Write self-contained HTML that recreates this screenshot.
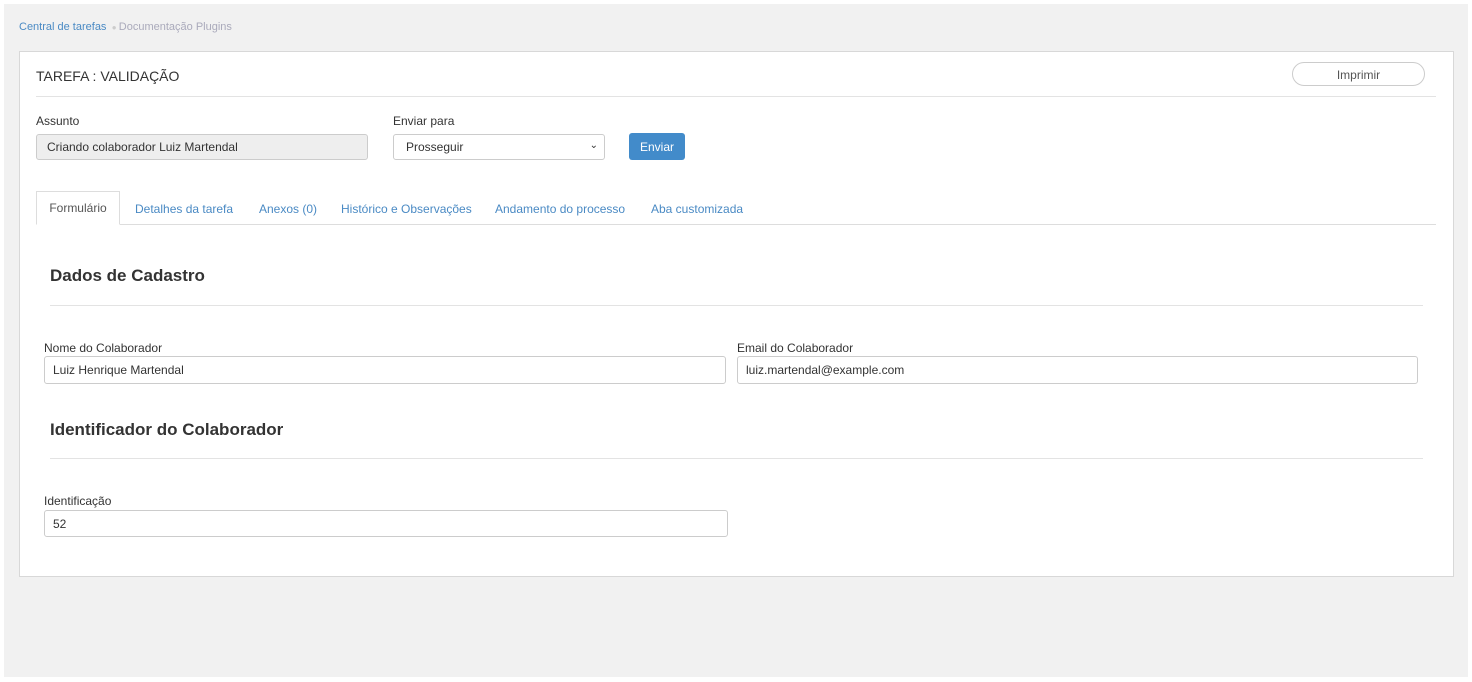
<!DOCTYPE html>
<html><head><style>
*{box-sizing:border-box;margin:0;padding:0}
body{width:1472px;height:682px;background:#fff;font-family:"Liberation Sans",sans-serif;position:relative;overflow:hidden;color:#333}
.bg{position:absolute;left:4px;top:4px;width:1464px;height:673px;background:#f1f1f1}
.a{position:absolute;white-space:nowrap}
.panel{position:absolute;left:19px;top:51px;width:1435px;height:526px;background:#fff;border:1px solid #d8d8d8}
.in{position:absolute;border:1px solid #ccc;border-radius:3px;background:#fff;font-size:12px;padding-left:8px;display:flex;align-items:center;color:#333}
.hr{position:absolute;height:1px;background:#e3e3e3}
.lbl{font-size:12px;color:#333}
.tab{font-size:12px;color:#4a8ac4}
h2{position:absolute;font-size:17px;font-weight:bold;color:#333;white-space:nowrap}
</style></head><body>
<div class="bg"></div>
<div class="a" style="left:19px;top:21px;font-size:11px;color:#4a8ac4">Central de tarefas <span style="color:#ccc;font-size:8px">&nbsp;●&nbsp;</span><span style="color:#aab">Documentação Plugins</span></div>
<div class="panel"></div>
<div class="a" style="left:36px;top:68px;font-size:14px;color:#333">TAREFA : VALIDAÇÃO</div>
<div class="a" style="left:1292px;top:62px;width:133px;height:24px;border:1px solid #ccc;border-radius:12px;font-size:12px;color:#555;text-align:center;line-height:24px">Imprimir</div>
<div class="hr" style="left:36px;top:96px;width:1400px"></div>
<div class="a lbl" style="left:36px;top:114px">Assunto</div>
<div class="in" style="left:36px;top:134px;width:332px;height:26px;background:#eee;padding-left:10px">Criando colaborador Luiz Martendal</div>
<div class="a lbl" style="left:393px;top:114px">Enviar para</div>
<div class="in" style="left:393px;top:134px;width:212px;height:26px;padding-left:12px">Prosseguir<span style="position:absolute;right:6px;top:5px;font-size:10px">&#8964;</span></div>
<div class="a" style="left:629px;top:133px;width:56px;height:27px;background:#428bca;border-radius:3px;color:#fff;font-size:12px;text-align:center;line-height:28px">Enviar</div>
<div class="hr" style="left:36px;top:224px;width:1400px;background:#ddd"></div>
<div class="a" style="left:36px;top:191px;width:84px;height:34px;background:#fff;border:1px solid #ddd;border-bottom-color:#fff;font-size:12px;color:#555;text-align:center;line-height:33px">Formulário</div>
<div class="a tab" style="left:135px;top:202px">Detalhes da tarefa</div>
<div class="a tab" style="left:259px;top:202px">Anexos (0)</div>
<div class="a tab" style="left:341px;top:202px">Histórico e Observações</div>
<div class="a tab" style="left:495px;top:202px">Andamento do processo</div>
<div class="a tab" style="left:651px;top:202px">Aba customizada</div>
<h2 style="left:50px;top:266px">Dados de Cadastro</h2>
<div class="hr" style="left:50px;top:305px;width:1373px"></div>
<div class="a lbl" style="left:44px;top:341px">Nome do Colaborador</div>
<div class="in" style="left:44px;top:356px;width:682px;height:28px">Luiz Henrique Martendal</div>
<div class="a lbl" style="left:737px;top:341px">Email do Colaborador</div>
<div class="in" style="left:737px;top:356px;width:681px;height:28px">luiz.martendal@example.com</div>
<h2 style="left:50px;top:420px">Identificador do Colaborador</h2>
<div class="hr" style="left:50px;top:458px;width:1373px"></div>
<div class="a lbl" style="left:44px;top:494px">Identificação</div>
<div class="in" style="left:44px;top:510px;width:684px;height:27px">52</div>
</body></html>
